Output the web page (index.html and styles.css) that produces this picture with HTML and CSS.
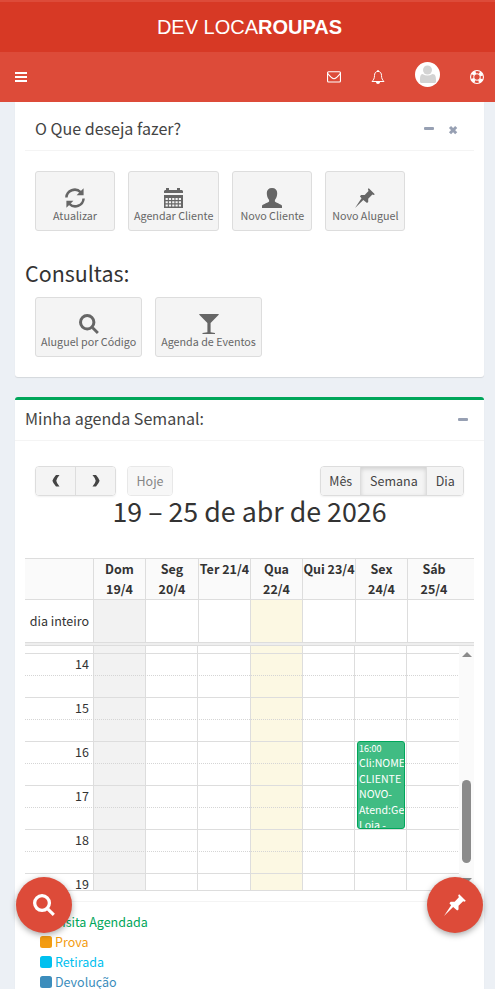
FILE: index.html
```html
<!DOCTYPE html>
<html lang="pt-BR">
<head>
<meta charset="utf-8">
<title>Dev LocaRoupas</title>
<link rel="stylesheet" href="styles.css">
</head>
<body>
<svg class="defs" width="0" height="0">
  <symbol id="search" viewBox="0 0 20 20"><circle cx="8.2" cy="8.2" r="6.7" fill="none" stroke="currentColor" stroke-width="3"/><path d="M12.6 14.7l2-2 5.3 5.2-2 2z" fill="currentColor"/></symbol>
  <symbol id="pin" viewBox="0 0 20 20"><path fill="currentColor" d="M13.8.2L19.8 6.2 18.8 7.1 17.4 6.5 13.2 10.7V14L12 15.1 8.3 11.9 0 20 6.5 10.2 4.9 8.3 6.1 7.1H9.7L13.5 3 12.9 1.1z"/></symbol>
</svg>
<header class="header">
  <a class="logo">DEV LOCA<b>ROUPAS</b></a>
  <nav class="navbar">
    <svg class="bars" width="12" height="10" viewBox="0 0 12 10"><path fill="#fff" d="M0 0h12v2H0zM0 4h12v2H0zM0 8h12v2H0z"/></svg>
    <svg class="mail" width="14" height="12" viewBox="0 0 14 12"><g fill="none" stroke="#fff" stroke-width="1.1"><rect x=".55" y=".8" width="12.9" height="10.2" rx="1"/><path d="M.8 2.7C3 5.4 5.6 7.8 7 7.8S11 5.4 13.2 2.7"/></g></svg>
    <svg class="bell" width="14" height="14" viewBox="0 0 14 14"><path fill="none" stroke="#fff" d="M7 1.4C4.500 1.400 3.500 3.400 3.500 5.500 3.500 8.500 2.500 10 1 11.500H13C11.500 10 10.500 8.500 10.500 5.500 10.500 3.400 9.500 1.400 7 1.400z"/><path fill="#fff" d="M6.300 0h1.400v1.500H6.300zM5 12h4c0 1.200-.8 2-2 2s-2-.8-2-2z"/></svg>
    <svg class="avatar" width="25" height="25" viewBox="0 0 25 25"><circle cx="12.5" cy="12.5" r="12.500" fill="#fff"/><circle cx="12.500" cy="8" r="4.500" fill="#d3d3d3"/><path fill="#d3d3d3" d="M7.500 12q5 3 10 0c3 0 3.500 3 3.500 6v1.500q0 1.500-1.500 1.500h-13Q5 21 5 19.500V18c0-3 .5-6 2.500-6z"/></svg>
    <svg class="ring" width="14" height="14" viewBox="0 0 14 14"><g fill="none" stroke="#fff"><circle cx="7" cy="7" r="6.450" stroke-width="1.100"/><circle cx="7" cy="7" r="3.300"/><circle cx="7" cy="7" r="4.900" stroke-width="3" stroke-dasharray="3.850 3.850" stroke-dashoffset="-1.930"/></g></svg>
  </nav>
</header>
<main class="content">
  <section class="box actions">
    <div class="box-head">
      <h3>O Que deseja fazer?</h3>
      <svg class="tool" width="34" height="10" viewBox="0 0 34 10"><rect y="2" width="10" height="3" rx="1" fill="#97a0b3"/><path d="M26 2l6.200 6.200M32.200 2L26 8.200" stroke="#97a0b3" stroke-width="3"/></svg>
    </div>
    <div class="apps">
      <a class="app"><svg width="20" height="20" viewBox="0 0 20 20"><g fill="none" stroke="currentColor" stroke-width="2.500"><path d="M1.400 9.500A8.300 8.300 0 0 1 15.600 4.200"/><path d="M18.600 10.500A8.300 8.300 0 0 1 4.400 15.800"/></g><path fill="currentColor" d="M18.600.3v7h-7zM1.400 19.700v-7h7z"/></svg>Atualizar</a>
      <a class="app"><svg width="20" height="20" viewBox="0 0 20 20"><path fill="currentColor" d="M0 5V3l1-1h1V0h3v2h8V0h3v2h2l1 1v2z"/><path fill="currentColor" d="M0 7h19v13H0z"/><path stroke="#f4f4f4" stroke-width="2" stroke-dasharray="2.200 1.100" d="M1.600 11h16M1.600 14.200h16M1.600 17.400h16"/></svg>Agendar Cliente</a>
      <a class="app"><svg width="20" height="20" viewBox="0 0 20 20"><path fill="currentColor" d="M10 0c3.400 0 5.200 2 5.200 5 0 3-.8 5.300-2.300 7v1.600c0 .8 6.300 2.700 7.100 4.200V20H0v-2.200c.8-1.500 7.100-3.400 7.100-4.200V12C5.600 10.300 4.800 8 4.800 5c0-3 1.800-5 5.200-5z"/></svg>Novo Cliente</a>
      <a class="app"><svg width="20" height="20"><use href="#pin"/></svg>Novo Aluguel</a>
    </div>
    <h2>Consultas:</h2>
    <div class="apps second">
      <a class="app"><svg width="20" height="20"><use href="#search"/></svg>Aluguel por Código</a>
      <a class="app"><svg width="20" height="20" viewBox="0 0 20 20"><path fill="currentColor" d="M.3 0h19.400v.7L11.600 9v9.200l4.400.8v1H3.500v-1l4.900-.8V9L.3.700z"/></svg>Agenda de Eventos</a>
    </div>
  </section>
  <section class="box agenda">
    <div class="box-head">
      <h3>Minha agenda Semanal:</h3>
      <svg class="tool" width="10" height="10" viewBox="0 0 10 10"><rect y="2" width="10" height="3" rx="1" fill="#97a0b3"/></svg>
    </div>
    <div class="toolbar">
      <div class="group arrows">
        <button><svg width="8" height="12" viewBox="0 0 8 12"><path fill="#444" d="M4 0h3.500Q4.500 3.500 4.300 5.700 4.500 8 7.500 11.500H4Q1 8 .4 5.700 1 3.500 4 0z"/></svg></button>
        <button><svg width="8" height="12" viewBox="0 0 8 12"><path fill="#444" d="M4 0H.5Q3.500 3.500 3.700 5.700 3.500 8 .5 11.500H4Q7 8 7.600 5.700 7 3.500 4 0z"/></svg></button>
      </div>
      <div class="group today"><button>Hoje</button></div>
      <div class="group views"><button>Mês</button><button class="active">Semana</button><button>Dia</button></div>
    </div>
    <h1>19 – 25 de abr de 2026</h1>
    <div class="calendar">
      <div class="cols days"><div></div><div>Dom<br>19/4</div><div>Seg<br>20/4</div><div>Ter 21/4</div><div>Qua<br>22/4</div><div>Qui 23/4</div><div>Sex<br>24/4</div><div class="last">Sáb<br>25/4</div></div>
      <div class="cols allday"><div>dia inteiro</div><div class="off"></div><div></div><div></div><div class="now"></div><div></div><div></div><div></div></div>
      <div class="divider"></div>
      <div class="scroller">
        <div class="cols grid">
          <div class="hours"><span>14</span><span>15</span><span>16</span><span>17</span><span>18</span><span>19</span></div>
          <div class="off"></div><div></div><div></div><div class="now"></div><div></div>
          <div class="friday"><div class="event"><small>16:00</small>Cli:NOME<br>CLIENTE<br>NOVO-<br>Atend:Ger<br>Loja -</div></div>
          <div></div>
        </div>
        <div class="scrollbar"><i class="up"></i><i class="thumb"></i><i class="down"></i></div>
      </div>
    </div>
    <ul class="legend">
      <li class="green"><i></i>Visita Agendada</li>
      <li class="orange"><i></i>Prova</li>
      <li class="cyan"><i></i>Retirada</li>
      <li class="blue"><i></i>Devolução</li>
    </ul>
  </section>
</main>
<a class="fab left"><svg width="22" height="22"><use href="#search"/></svg></a>
<a class="fab right"><svg width="22" height="22"><use href="#pin"/></svg></a>
</body>
</html>
```
FILE: styles.css
```css
* { box-sizing: border-box; }
html, body { margin: 0; height: 989px; overflow: hidden; }
body {
  position: relative;
  background: #ecf0f5;
  color: #333;
  font: 12.5px/20px "Noto Sans CJK JP", sans-serif;
}
svg { display: block; flex: none; }
.defs { position: absolute; }
h1, h2, h3 { margin: 0; font-weight: 400; }

.header { height: 102px; padding-top: 2px; background: #dd4b39; }
.logo {
  display: block;
  height: 50px;
  padding-left: 4px;
  background: #d73925;
  color: #fff;
  font: 20px/50px "Liberation Sans", sans-serif;
  text-align: center;
}
.navbar { display: flex; align-items: flex-start; height: 50px; padding: 0 11px 0 15px; }
.bars { margin: 20px auto 0 0; }
.mail { margin: 19px 30px 0 0; }
.bell { margin: 18px 30px 0 0; }
.avatar { margin: 10px 30px 0 0; }
.ring { margin-top: 18px; }

.content { padding: 0 11px 0 15px; }
.box { background: #fff; border-radius: 3px; box-shadow: 0 1px 1px rgba(0, 0, 0, .1); }
.box-head { display: flex; justify-content: space-between; border-bottom: 1px solid #f4f4f4; }
.box-head h3 { color: #444; font-size: 16.07px; line-height: 18px; }
.actions { height: 275px; padding: 0 10px; border-radius: 0 0 3px 3px; }
.actions .box-head { height: 49px; padding: 17px 16px 0 10px; }
.actions .tool { margin-top: 6px; }
.agenda .tool { margin-top: 7px; }
.apps { display: flex; gap: 13px; padding: 20px 10px 0; }
.app {
  display: flex;
  flex-direction: column;
  align-items: center;
  min-width: 80px;
  height: 60px;
  padding: 16px 5px 0;
  border: 1px solid #ddd;
  border-radius: 3px;
  background: #f4f4f4;
  color: #666;
  font-size: 10.74px;
  line-height: 16px;
  white-space: nowrap;
}
.actions h2 { margin-top: 30px; font-size: 21.43px; line-height: 23px; }
.apps.second { padding-top: 13px; }

.agenda { height: 620px; margin-top: 20px; border-top: 3px solid #00a65a; }
.agenda .box-head { height: 41px; padding: 9px 16px 0 10px; }
.toolbar { display: flex; height: 55px; padding: 25px 20px 0; }
.group { display: flex; height: 30px; border: 1px solid #ddd; border-radius: 4px; overflow: hidden; box-shadow: 0 1px 2px rgba(0, 0, 0, .06); }
.group button {
  display: flex;
  align-items: center;
  justify-content: center;
  flex: auto;
  padding: 0;
  border: 0;
  background: #f4f4f4;
  color: #444;
  font: inherit;
}
.group button + button { border-left: 1px solid #ddd; }
.arrows { width: 81px; }
.today { width: 46px; margin-left: 11px; opacity: .65; box-shadow: none; }
.views { width: 144px; margin-left: auto; }
.views .active { flex: 0 0 66px; box-shadow: inset 0 2px 4px rgba(0, 0, 0, .15); }
h1 { font-size: 26.79px; line-height: 30px; text-align: center; }

.calendar { margin: 32px 10px 0; }
.cols { display: grid; }
.cols > div + div { border-left: 1px solid #ddd; }
.days, .allday { grid-template-columns: 68px 52px 53px 52px 52px 53px 52px 67px; }
.days { height: 41px; border-top: 1px solid #ddd; background: #fafafa; font-weight: 700; text-align: center; white-space: nowrap; }
.days .last { padding-right: 14px; }
.allday { height: 44px; border: solid #ddd; border-width: 1px 0; line-height: 42px; }
.allday > div:first-child { padding-right: 4px; text-align: right; }
.off { background: #f2f2f2; }
.now { background: #fcf8e3; }
.divider { height: 3px; border-bottom: 1px solid #ddd; background: #eee; }
.scroller { display: flex; height: 245px; border-bottom: 1px solid #ddd; overflow: hidden; }
.grid { position: relative; width: 434px; height: 245px; grid-template-columns: 68px 52px 52px 53px 52px 52px 52px 53px; }
.grid::after {
  content: "";
  position: absolute;
  inset: 0;
  background: repeating-linear-gradient(to bottom, #ddd 0 1px, transparent 1px 44px) 0 7px no-repeat;
}
.grid::before {
  content: "";
  position: absolute;
  inset: 0;
  background: conic-gradient(from 270deg at 1px 1px, #d5d5d5 90deg, transparent 0) 0 29px / 2px 44px;
}
.hours { padding-top: 8px; text-align: right; }
.hours span { display: block; height: 44px; padding-right: 4px; }
.friday { position: relative; z-index: 1; }
.event {
  position: absolute;
  top: 95px;
  left: 2px;
  width: 48px;
  height: 88px;
  padding: 0 1px;
  overflow: hidden;
  border: 1px solid #00a65a;
  border-radius: 3px;
  background: #40bc83;
  color: #fff;
  font-size: 10.63px;
  line-height: 15.5px;
  white-space: nowrap;
}
.event small { display: block; height: 13px; font-size: 9.03px; line-height: 13px; }
.scrollbar { display: flex; flex-direction: column; align-items: center; width: 15px; background: #fafafa; }
.up { margin-top: 6px; border: solid transparent; border-width: 0 5px 5px; border-bottom-color: #8b8b8b; }
.thumb { width: 9px; height: 83px; margin-top: 123px; border-radius: 5px; background: #8b8b8b; }
.down { margin-top: 15px; border: solid transparent; border-width: 5px 5px 0; border-top-color: #8b8b8b; }
.legend { margin: 10px 0 0; padding: 10px 25px; border-top: 1px solid #f4f4f4; list-style: none; }
.legend li { display: flex; align-items: center; }
.legend i { width: 12px; height: 12px; margin-right: 3px; border-radius: 2.500px; background: currentColor; }
.green { color: #00a65a; }
.orange { color: #f39c12; }
.cyan { color: #00c0ef; }
.blue { color: #3c8dbc; }
.fab {
  position: absolute;
  top: 877px;
  display: flex;
  align-items: center;
  justify-content: center;
  width: 56px;
  height: 56px;
  border-radius: 50%;
  background: #dd4b39;
  color: #fff;
  box-shadow: 0 2px 6px rgba(0, 0, 0, .35);
}
.fab.left { left: 16px; }
.fab.right { left: 427px; }
```
